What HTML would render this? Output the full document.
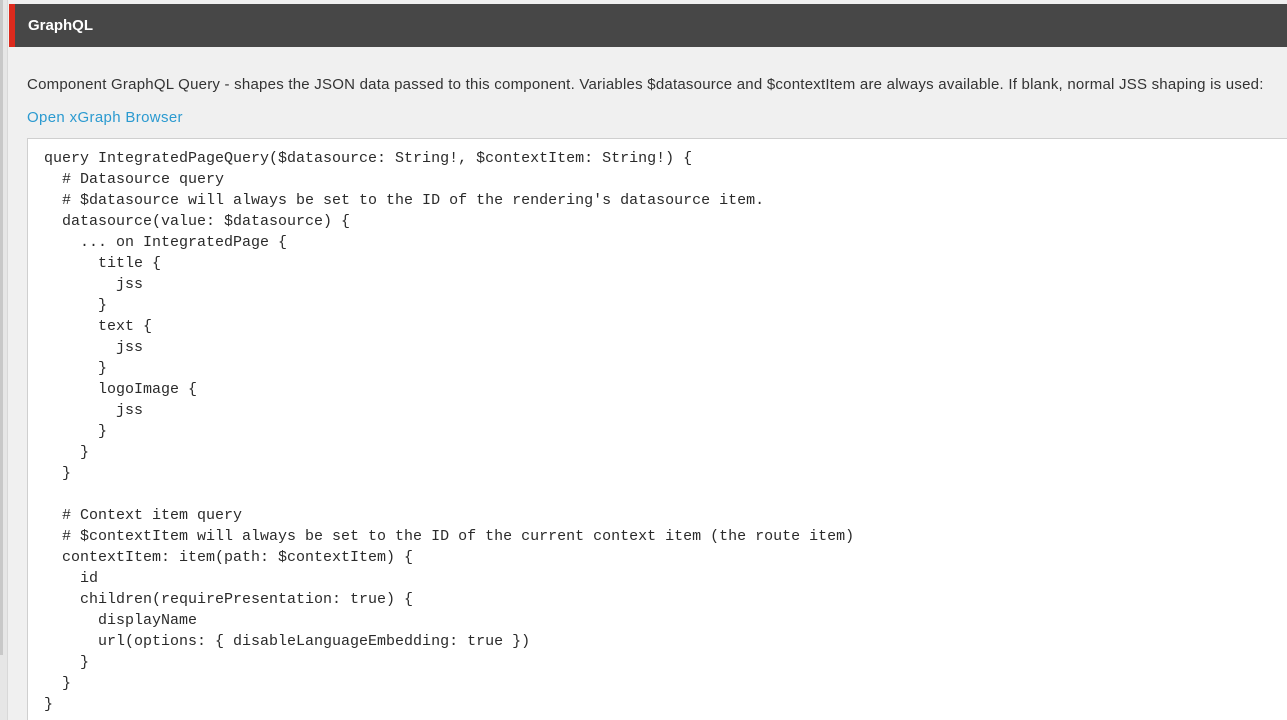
<!DOCTYPE html>
<html><head><meta charset="utf-8"><style>
html,body{margin:0;padding:0;width:1287px;height:720px;overflow:hidden;background:#f0f0f0;font-family:"Liberation Sans",sans-serif;position:relative}
.lstrip{position:absolute;left:0;top:0;width:7px;height:720px;background:#e6e6e6;border-right:1px solid #d8d8d8}
.lbar{position:absolute;left:0;top:0;width:3px;height:655px;background:#c8c8c8}
.hdr{position:absolute;left:9px;top:4px;right:0;height:43px;background:#474747}
.red{position:absolute;left:0;top:0;width:6px;height:43px;background:#dc2a1d}
.hdr span{position:absolute;left:19px;top:13px;color:#fff;font-weight:bold;font-size:15px}
.desc{position:absolute;left:27px;top:76px;font-size:15px;color:#333;white-space:nowrap;letter-spacing:0.23px}
.link{position:absolute;left:27px;top:109px;font-size:15px;color:#2b9ad0;letter-spacing:0.35px}
.ta{position:absolute;left:27px;top:138px;width:1300px;height:600px;background:#fff;border:1px solid #cfcfcf;overflow:hidden}
pre{margin:0;position:absolute;left:16px;top:9px;font-family:"Liberation Mono",monospace;font-size:15px;line-height:21px;color:#2a2a2a}
</style></head><body>
<div class="lstrip"></div><div class="lbar"></div>
<div class="hdr"><div class="red"></div><span>GraphQL</span></div>
<div class="desc">Component GraphQL Query - shapes the JSON data passed to this component. Variables $datasource and $contextItem are always available. If blank, normal JSS shaping is used:</div>
<div class="link">Open xGraph Browser</div>
<div class="ta"><pre>query IntegratedPageQuery($datasource: String!, $contextItem: String!) {
  # Datasource query
  # $datasource will always be set to the ID of the rendering's datasource item.
  datasource(value: $datasource) {
    ... on IntegratedPage {
      title {
        jss
      }
      text {
        jss
      }
      logoImage {
        jss
      }
    }
  }

  # Context item query
  # $contextItem will always be set to the ID of the current context item (the route item)
  contextItem: item(path: $contextItem) {
    id
    children(requirePresentation: true) {
      displayName
      url(options: { disableLanguageEmbedding: true })
    }
  }
}</pre></div>
</body></html>
